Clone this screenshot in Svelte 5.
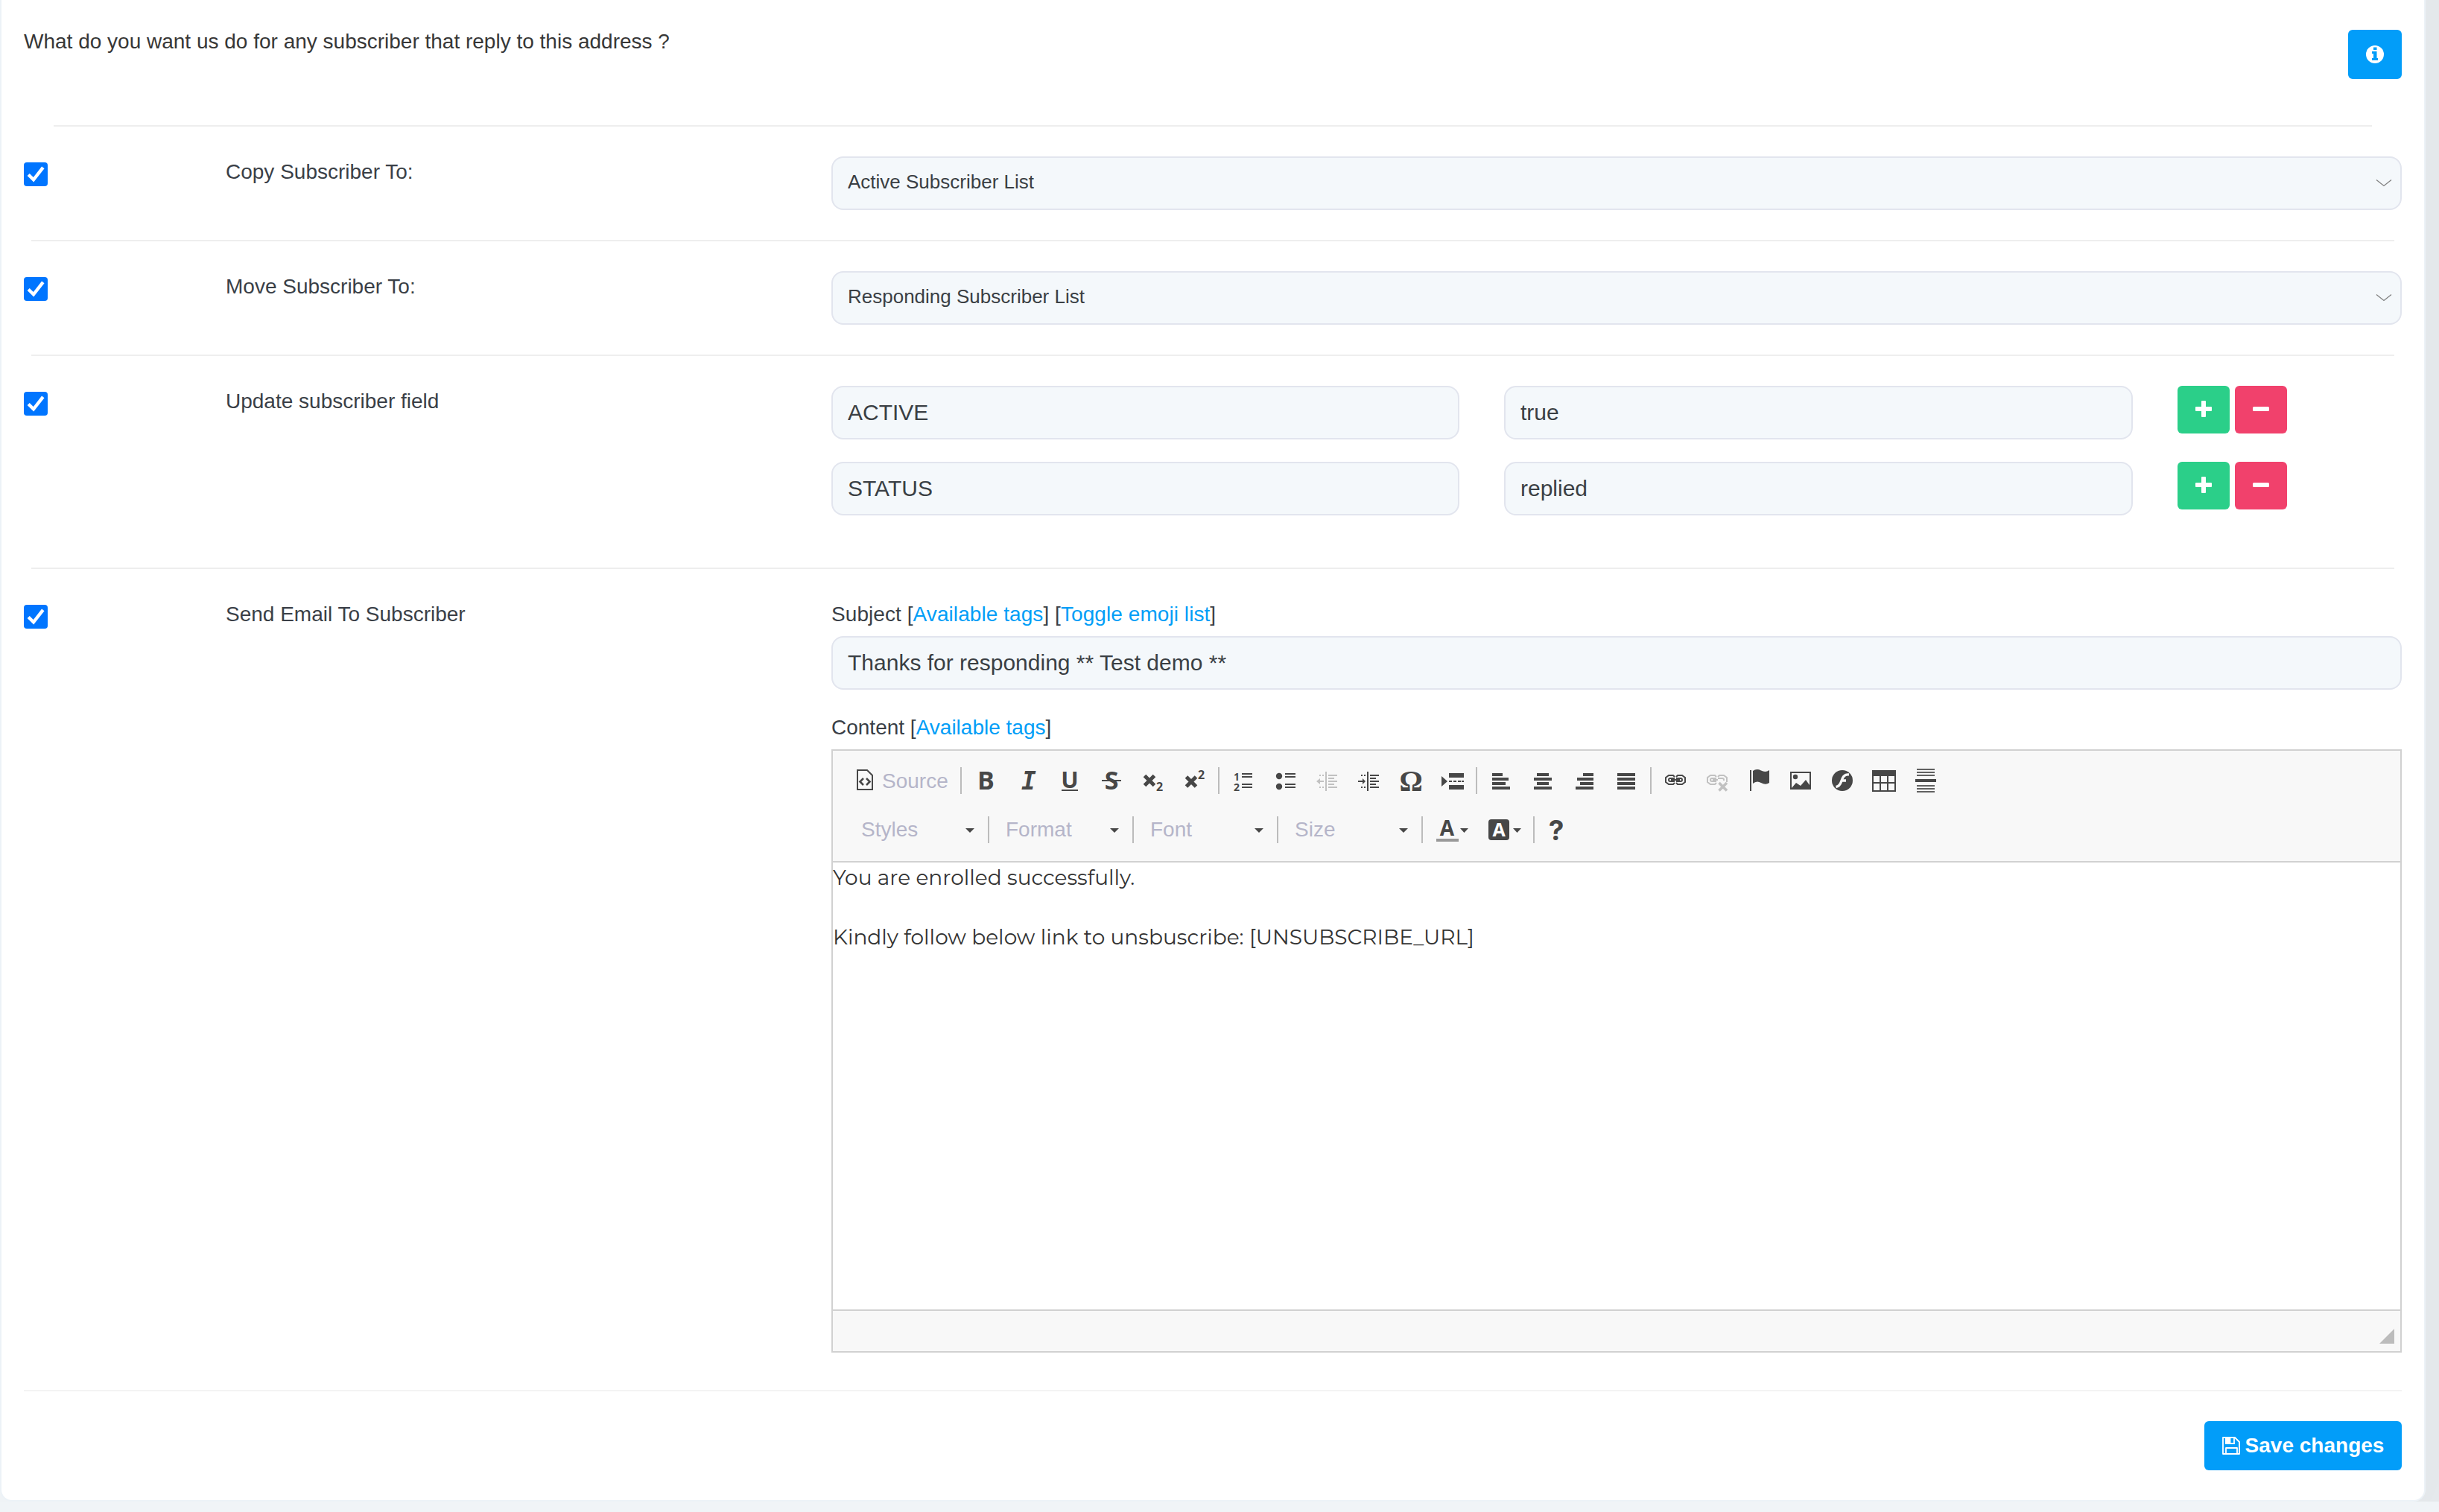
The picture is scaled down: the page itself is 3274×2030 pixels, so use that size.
<script>
  const lists = ["Active Subscriber List", "Responding Subscriber List"];
  let copyTo = lists[0];
  let moveTo = lists[1];
  let subject = "Thanks for responding ** Test demo **";
  let fields = [
    { name: "ACTIVE", value: "true" },
    { name: "STATUS", value: "replied" }
  ];

  // toolbar groups, every group follows a separator
  const groups = [
    ["bold", "italic", "underline", "strike", "sub", "sup"],
    ["numbered", "bulleted", "outdent", "indent", "omega", "pagebreak"],
    ["left", "center", "right", "justify"],
    ["link", "unlink", "flag", "image", "flash", "table", "hr"]
  ];
  const combos = ["Styles", "Format", "Font", "Size"];

  // [x, width] of the four bars
  const bars = {
    left: [[4, 14], [4, 22], [4, 18], [4, 24]],
    center: [[8, 16], [4, 24], [8, 16], [4, 24]],
    right: [[14, 14], [6, 22], [10, 18], [4, 24]],
    justify: [[4, 24], [4, 24], [4, 24], [4, 24]]
  };

  function addField(index) {
    fields.splice(index + 1, 0, { name: "", value: "" });
    fields = fields;
  }

  function removeField(index) {
    fields = fields.filter((_, i) => i !== index);
  }
</script>

<style>
  :global(body) {
    background: #f0f4f7;
    overflow: hidden;
  }

  /* the card starts above the top of the window */
  .card {
    box-sizing: border-box;
    width: 3256px;
    height: 2216px;
    margin-top: -200px;
    padding: 200px 30px 40px;
    background: #fff;
    border: 2px solid #ecf2f7;
    border-top: none;
    border-radius: 0 0 16px 16px;
    box-shadow: 70px 75px 100px rgba(0, 0, 0, .055);
    font: 28px/40px "Helvetica Neue", "Liberation Sans", Arial, sans-serif;
    color: #3a3f47;
  }

  header {
    display: flex;
    justify-content: space-between;
    align-items: flex-start;
    box-sizing: border-box;
    height: 168px;
    padding-top: 40px;
  }

  header p {
    margin: -4px 0 0;
    color: #373737;
  }

  hr {
    height: 2px;
    margin: 40px 10px;
    border: none;
    background: #eee;
  }

  hr.first {
    margin: 0 40px 40px;
  }

  hr.last {
    margin: 50px 0 40px;
    background: #f3f3f3;
  }

  .row {
    display: grid;
    grid-template-columns: 271px 813px 2108px;
  }

  .label {
    padding-top: 1px;
  }

  .check {
    position: relative;
    width: 32px;
    height: 32px;
    margin-top: 8px;
  }

  .check input {
    appearance: none;
    display: block;
    width: 32px;
    height: 32px;
    margin: 0;
    border: 2px solid #767676;
    border-radius: 4px;
    background: #fff;
  }

  .check input:checked {
    border: none;
    background: #0075ff;
  }

  .check svg {
    position: absolute;
    left: 0;
    top: 0;
    pointer-events: none;
  }

  .control {
    box-sizing: border-box;
    display: block;
    width: 100%;
    height: 72px;
    padding: 0 20px;
    border: 2px solid #e2e5ee;
    border-radius: 16px;
    background: #f4f8fb;
    font: 30px "Helvetica Neue", "Liberation Sans", Arial, sans-serif;
    color: #3a3f44;
    outline: none;
  }

  .select {
    position: relative;
  }

  select.control {
    appearance: none;
    padding-bottom: 4px;
    font-size: 26px;
  }

  .select svg {
    position: absolute;
    right: 12px;
    top: 28px;
    pointer-events: none;
  }

  .fields {
    display: grid;
    row-gap: 30px;
    padding-bottom: 30px;
  }

  .field {
    display: grid;
    grid-template-columns: 843px 844px auto;
    column-gap: 60px;
    align-items: start;
  }

  .actions {
    display: flex;
    gap: 7px;
  }

  .btn {
    display: flex;
    align-items: center;
    justify-content: center;
    padding: 0;
    border: none;
    border-radius: 6px;
    color: #fff;
    background: #029df9;
    cursor: pointer;
  }

  .info {
    width: 72px;
    height: 66px;
  }

  .add,
  .remove {
    width: 70px;
    height: 64px;
    padding-bottom: 2px;
  }

  .add {
    background: #2bcf89;
  }

  .remove {
    background: #f1416c;
  }

  .caption {
    margin: 0 0 9px;
    padding-top: 1px;
    letter-spacing: .07px;
    white-space: pre;
  }

  .caption a {
    color: #009ef7;
    text-decoration: none;
  }

  .content {
    margin-top: 30px;
    letter-spacing: 0;
  }

  .editor {
    display: flex;
    flex-direction: column;
    box-sizing: border-box;
    height: 810px;
    border: 2px solid #d1d1d1;
  }

  .toolbar {
    box-sizing: border-box;
    height: 150px;
    padding: 16px 0 0 16px;
    border-bottom: 2px solid #d1d1d1;
    background: #f8f8f8;
    color: #474747;
  }

  .line {
    display: flex;
    align-items: center;
    height: 48px;
    margin-bottom: 18px;
  }

  .line svg {
    display: block;
    flex: none;
    overflow: visible;
  }

  .sep {
    flex: none;
    width: 2px;
    height: 36px;
    margin: 0 4px;
    background: #bcbcbc;
  }

  .tool {
    display: flex;
    justify-content: center;
    width: 56px;
  }

  .tool.disabled {
    color: #c1c1c1;
  }

  .help {
    width: 52px;
  }

  .source {
    display: flex;
    box-sizing: border-box;
    width: 151px;
    padding-left: 11px;
    gap: 7px;
    color: #b5b5c9;
    line-height: 35px;
  }

  .source svg {
    color: #474747;
  }

  .combo {
    display: flex;
    box-sizing: border-box;
    align-items: center;
    justify-content: space-between;
    width: 184px;
    padding: 0 14px 0 18px;
    color: #b5b5c9;
    line-height: 36px;
  }

  .combo:first-child {
    width: 188px;
    padding-left: 22px;
  }

  .combo svg {
    color: #474747;
    margin-top: 2px;
  }

  .color {
    display: flex;
    align-items: center;
    width: 70px;
  }

  .doc {
    flex: 1;
    padding: 1px 0;
    font: 28px/39px Montserrat, Inter, sans-serif;
    color: #333;
  }

  .doc p {
    margin: 0 0 41px;
  }

  .bottom {
    display: flex;
    justify-content: flex-end;
    align-items: flex-end;
    box-sizing: border-box;
    height: 56px;
    padding: 0 8px 10px;
    border-top: 2px solid #d1d1d1;
    background: #f8f8f8;
  }

  footer {
    display: flex;
    justify-content: flex-end;
  }

  .save {
    width: 265px;
    height: 66px;
    gap: 7px;
    font: bold 28px "Helvetica Neue", "Liberation Sans", Arial, sans-serif;
  }

  .sans {
    font-family: "Open Sans", sans-serif;
    font-weight: bold;
  }

  .mono {
    font-family: "DejaVu Sans Mono", monospace;
    font-weight: bold;
    font-style: italic;
  }

  .serif {
    font-family: "Liberation Serif", serif;
    font-weight: bold;
  }

  .inter {
    font-family: Inter, sans-serif;
    font-weight: bold;
  }
</style>

{#snippet check()}
  <div class="check">
    <input type="checkbox" checked>
    <svg width="32" height="32" viewBox="0 0 32 32">
      <path d="M6.2 16.5L13 23.3L25.8 6.8" fill="none" stroke="#fff" stroke-width="4.4" />
    </svg>
  </div>
{/snippet}

{#snippet chevron()}
  <svg width="24" height="14" viewBox="0 0 24 14">
    <path d="M2 3.5L12 11.5L22 3.5" fill="none" stroke="#808080" stroke-width="1.3" />
  </svg>
{/snippet}

{#snippet caret()}
  <svg width="12" height="6" viewBox="0 0 12 6"><path d="M0 0H12L6 6Z" fill="currentColor" /></svg>
{/snippet}

{#snippet icon(name)}
  <svg width="32" height="32" viewBox="0 0 32 32" fill="currentColor">
    {#if name === "bold"}
      <text x="5" y="28" font-size="34" class="sans">B</text>
    {:else if name === "italic"}
      <text x="8" y="28" font-size="33" class="mono">I</text>
    {:else if name === "underline"}
      <text x="17" y="26" font-size="31" text-anchor="middle" class="sans">U</text>
      <path d="M6 28h22v2H6z" />
    {:else if name === "strike"}
      <text x="17" y="28" font-size="34" text-anchor="middle" class="sans">S</text>
      <path d="M4 15h26v2H4z" />
    {:else if name === "sub" || name === "sup"}
      <path d={name === "sub" ? "M5.5 9.5L18.5 22.5M18.5 9.5L5.5 22.5" : "M5.5 11L18.5 24M18.5 11L5.5 24"} stroke="currentColor" stroke-width="5" />
      <text x="21" y={name === "sub" ? 30 : 14} font-size="16" class="sans">2</text>
    {:else if name === "numbered"}
      <text x="3" y="16" font-size="14" class="sans">1</text>
      <text x="3" y="30" font-size="14" class="sans">2</text>
      <path d="M14 6h14v2H14zM14 10h14v2H14zM14 20h14v2H14zM14 24h14v2H14z" />
    {:else if name === "bulleted"}
      <circle cx="8" cy="10" r="4.2" />
      <circle cx="8" cy="24" r="4.2" />
      <path d="M16 6h14v2H16zM16 10h14v2H16zM16 20h14v2H16zM16 24h14v2H16z" />
    {:else if name === "outdent" || name === "indent"}
      <path d="M14 4h2v26h-2zM18 8h12v2H18zM18 12h8v2h-8zM18 16h12v2H18zM18 20h8v2h-8zM18 24h12v2H18zM6 8h2v2H6zM10 8h2v2h-2zM6 24h2v2H6zM10 24h2v2h-2z" />
      {#if name === "outdent"}
        <path d="M2 17L7 13v3h5v2H7v3z" />
      {:else}
        <path d="M12 17L8 13v3H2v2h6v3z" />
      {/if}
    {:else if name === "omega"}
      <text x="17" y="30" font-size="39" text-anchor="middle" class="serif">Ω</text>
    {:else if name === "pagebreak"}
      <path d="M2 10v14l8-7zM12 6h20v6H12zM12 22h20v6H12zM12 16h4v2h-4zM18 16h4v2h-4zM24 16h4v2h-4zM29 16h3v2h-3z" />
    {:else if bars[name]}
      {#each bars[name] as [x, width], i}
        <rect {x} y={6 + i * 6} {width} height="4" />
      {/each}
    {:else if name === "link" || name === "unlink"}
      <g fill="none" stroke="currentColor" stroke-width="2">
        <path d="M15 11L13 9H7L3 12V18L7 21H13L15 19" />
        <path d={name === "link" ? "M17 11L19 9H25L29 12V18L25 21H19L17 19" : "M17 11L19 9H25L29 12V18"} />
        <path d="M15 13H9Q7 13 7 15T9 17H15" />
        <path d={name === "link" ? "M10 15H22M17 13H23Q25 13 25 15T23 17H17" : "M10 15H17M17 13H23Q25 13 25 15V16"} />
      </g>
      {#if name === "unlink"}
        <path d="M18.5 19L29 29.5M29 19L18.5 29.5" stroke="currentColor" stroke-width="3.6" />
      {/if}
    {:else if name === "flag"}
      <path d="M4 2h2v28H4zM8 3Q13 -.5 19 2.5T30 2V19Q25 22.5 19 19T8 20z" />
    {:else if name === "image"}
      <path fill-rule="evenodd" d="M2 4h28v24H2zM4 6v20l6-7 6 4 7-8 5 7V6z" />
      <circle cx="9" cy="11" r="3.2" />
    {:else if name === "flash"}
      <circle cx="16" cy="16" r="14" />
      <path d="M25 8C18 7 16 13 14.5 17.5S11 24 7.5 24.5M14 16H21" fill="none" stroke="#f8f8f8" stroke-width="3.4" />
    {:else if name === "table"}
      <path fill-rule="evenodd" d="M0 2h32v29H0zM2 10h8v8H2zM12 10h8v8h-8zM22 10h8v8h-8zM2 20h8v9H2zM12 20h8v9h-8zM22 20h8v9h-8z" />
    {:else if name === "hr"}
      <path d="M4 0h24v2H4zM4 4h24v2H4zM4 8h24v2H4zM4 22h24v2H4zM4 26h24v2H4zM4 30h24v2H4z" opacity=".85" />
      <path d="M2 14h28v4H2z" />
    {/if}
  </svg>
{/snippet}

<div class="card">
  <header>
    <p>What do you want us do for any subscriber that reply to this address ?</p>
    <button class="btn info" aria-label="Info">
      <svg width="24" height="24" viewBox="0 0 24 24">
        <circle cx="12" cy="12" r="12" fill="#fff" />
        <path d="M10 2.5h4.5v3.5H10zM8 8h6.5v9H16v3H8v-3h2v-6H8z" fill="#029df9" />
      </svg>
    </button>
  </header>

  <hr class="first">

  <div class="row">
    {@render check()}
    <div class="label">Copy Subscriber To:</div>
    <div class="select">
      <select class="control" bind:value={copyTo}>
        {#each lists as list}<option>{list}</option>{/each}
      </select>
      {@render chevron()}
    </div>
  </div>

  <hr>

  <div class="row">
    {@render check()}
    <div class="label">Move Subscriber To:</div>
    <div class="select">
      <select class="control" bind:value={moveTo}>
        {#each lists as list}<option>{list}</option>{/each}
      </select>
      {@render chevron()}
    </div>
  </div>

  <hr>

  <div class="row">
    {@render check()}
    <div class="label">Update subscriber field</div>
    <div class="fields">
      {#each fields as field, i}
        <div class="field">
          <input class="control" bind:value={field.name}>
          <input class="control" bind:value={field.value}>
          <div class="actions">
            <button class="btn add" aria-label="Add" on:click={() => addField(i)}>
              <svg width="24" height="24" viewBox="0 0 24 24">
                <path d="M9 2Q9 1 10 1h4q1 0 1 1v7h7q1 0 1 1v4q0 1-1 1h-7v7q0 1-1 1h-4q-1 0-1-1v-7H2q-1 0-1-1v-4q0-1 1-1h7z" fill="#fff" />
              </svg>
            </button>
            <button class="btn remove" aria-label="Remove" on:click={() => removeField(i)}>
              <svg width="24" height="24" viewBox="0 0 24 24">
                <rect x="1" y="9" width="22" height="6" rx="1.5" fill="#fff" />
              </svg>
            </button>
          </div>
        </div>
      {/each}
    </div>
  </div>

  <hr>

  <div class="row">
    {@render check()}
    <div class="label">Send Email To Subscriber</div>
    <div>
      <p class="caption">Subject [<a href="#tags">Available tags</a>] [<a href="#emoji">Toggle emoji list</a>]</p>
      <input class="control" bind:value={subject}>
      <p class="caption content">Content [<a href="#tags">Available tags</a>]</p>

      <div class="editor">
        <div class="toolbar">
          <div class="line">
            <div class="source">
              <svg width="32" height="32" viewBox="0 0 32 32" fill="none" stroke="currentColor" stroke-width="2">
                <path d="M6 3H19L26 10V29H6Z" />
                <path d="M14 14L9.5 18.5L14 23M18 14L22.5 18.5L18 23" stroke-width="2.6" />
              </svg>
              Source
            </div>
            {#each groups as group}
              <span class="sep"></span>
              {#each group as name}
                <div class="tool" class:disabled={name === "outdent" || name === "unlink"}>{@render icon(name)}</div>
              {/each}
            {/each}
          </div>
          <div class="line">
            {#each combos as combo}
              <div class="combo">{combo}{@render caret()}</div>
              <span class="sep"></span>
            {/each}
            <div class="color">
              <svg width="57" height="32" viewBox="0 0 57 32">
                <text x="28.5" y="24" font-size="28" text-anchor="middle" fill="currentColor" class="sans">A</text>
                <path d="M14 28h30v4H14z" fill="#999" />
                <path d="M46 14h11l-5.5 6z" fill="currentColor" />
              </svg>
            </div>
            <div class="color">
              <svg width="58" height="32" viewBox="0 0 58 32">
                <rect x="14" y="2" width="28" height="28" rx="4" fill="currentColor" />
                <text x="28" y="25" font-size="25" text-anchor="middle" fill="#fff" class="sans">A</text>
                <path d="M47 14h11l-5.5 6z" fill="currentColor" />
              </svg>
            </div>
            <span class="sep"></span>
            <div class="tool help">
              <svg width="32" height="32" viewBox="0 0 32 32">
                <text x="15" y="29.5" font-size="37" text-anchor="middle" fill="currentColor" class="inter">?</text>
              </svg>
            </div>
          </div>
        </div>
        <div class="doc">
          <p>You are enrolled successfully.</p>
          <p>Kindly follow below link to unsbuscribe: [UNSUBSCRIBE_URL]</p>
        </div>
        <div class="bottom">
          <svg width="20" height="20" viewBox="0 0 20 20"><path d="M20 0V20H0Z" fill="#bcbcbc" /></svg>
        </div>
      </div>
    </div>
  </div>

  <hr class="last">

  <footer>
    <button class="btn save">
      <svg width="24" height="24" viewBox="0 0 24 24" fill="none" stroke="#fff" stroke-width="1.8">
        <path d="M1 1H17L23 7V23H1ZM5 23V15H20V23" stroke-linejoin="round" />
        <path d="M5 1V9H16V1" />
        <path d="M5 1H10.5V9H5Z" fill="#fff" />
      </svg>
      Save changes
    </button>
  </footer>
</div>
